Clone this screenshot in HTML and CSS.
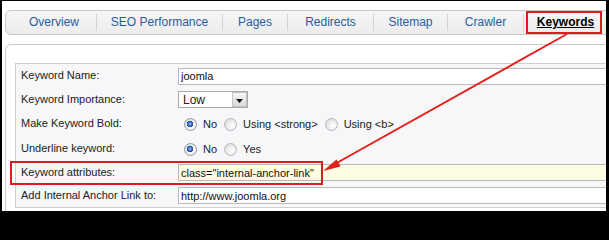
FILE: index.html
```html
<!DOCTYPE html>
<html>
<head>
<meta charset="utf-8">
<title>Keywords</title>
<link rel="stylesheet" href="styles.css">
</head>
<body>
<div class="frame">
  <nav class="tabs">
    <a class="tab w-overview">Overview</a>
    <a class="tab w-seo">SEO Performance</a>
    <a class="tab w-pages">Pages</a>
    <a class="tab w-redirects">Redirects</a>
    <a class="tab w-sitemap">Sitemap</a>
    <a class="tab w-crawler">Crawler</a>
    <a class="tab w-keywords active">Keywords</a>
  </nav>
  <div class="panel">
    <div class="form">
      <div class="label">Keyword Name:</div>
      <div class="value"><input class="text" type="text" readonly value="joomla"></div>

      <div class="label">Keyword Importance:</div>
      <div class="value">
        <div class="select"><span class="select-text">Low</span><span class="select-btn"><svg width="7" height="4" viewBox="0 0 7 4"><path d="M0 0h7L3.5 4z" fill="#111"/></svg></span></div>
      </div>

      <div class="label">Make Keyword Bold:</div>
      <div class="value">
        <span class="radio checked"></span><span class="opt">No</span>
        <span class="radio"></span><span class="opt">Using &lt;strong&gt;</span>
        <span class="radio"></span><span class="opt">Using &lt;b&gt;</span>
      </div>

      <div class="label">Underline keyword:</div>
      <div class="value">
        <span class="radio checked"></span><span class="opt">No</span>
        <span class="radio"></span><span class="opt">Yes</span>
      </div>

      <div class="label">Keyword attributes:</div>
      <div class="value"><input class="text focus" type="text" readonly value='class="internal-anchor-link"'></div>

      <div class="label">Add Internal Anchor Link to:</div>
      <div class="value"><input class="text" type="text" readonly value="http://www.joomla.org"></div>
    </div>
  </div>
</div>
<svg class="annot" width="609" height="214" viewBox="0 0 609 214">
  <rect x="527" y="12" width="74" height="21" fill="none" stroke="#dc1c20" stroke-width="2"/>
  <rect x="11" y="162" width="311" height="22" fill="none" stroke="#dc1c20" stroke-width="2"/>
  <line x1="567" y1="34" x2="334" y2="164.5" stroke="#e3201b" stroke-width="2"/>
  <polygon points="323,171 336.5,159.5 340.5,166.5" fill="#e3201b"/>
</svg>
</body>
</html>
```
FILE: styles.css
```css
html, body {
  margin: 0;
  padding: 0;
  overflow: hidden;
}
body {
  background: #000;
  width: 609px;
  height: 214px;
  position: relative;
  font-family: "Liberation Sans", Arial, sans-serif;
}
.frame {
  margin: 1px 3px 0 2px;
  height: 210px;
  background: #fff;
  overflow: hidden;
}
.tabs {
  margin: 9px 0 0 3px;
  width: 640px;
  height: 25px;
  box-sizing: border-box;
  border: 1px solid #c9c9c9;
  border-radius: 6px;
  background: linear-gradient(#f6f6f6, #ececec);
  display: flex;
  align-items: center;
  padding-left: 6px;
}
.tab {
  height: 17px;
  line-height: 17px;
  text-align: center;
  font-size: 12px;
  color: #2a5c9c;
  border-left: 1px solid #d2d2d2;
  box-sizing: border-box;
  white-space: nowrap;
}
.w-overview { width: 84px; border-left: none; }
.w-seo { width: 126px; }
.w-pages { width: 65px; }
.w-redirects { width: 86px; }
.w-sitemap { width: 74px; }
.w-crawler { width: 76px; }
.w-keywords { width: 84px; }
.tab.active {
  color: #000;
  font-weight: bold;
  text-decoration: underline;
}
.panel {
  margin: 9px 0 0 3px;
  width: 640px;
  height: 200px;
  box-sizing: border-box;
  border: 1px solid #cbcbcb;
  border-radius: 6px;
  padding: 18px 0 0 9px;
}
.form {
  width: 620px;
  border: 1px solid #cfcfcf;
  background: #f7f7f9;
  display: grid;
  grid-template-columns: 162px 1fr;
  grid-template-rows: 24px 23px 26px 24px 23px 23px;
}
.label {
  display: flex;
  align-items: center;
  padding: 0 0 2px 5px;
  font-size: 11px;
  color: #222;
  white-space: nowrap;
}
.value {
  display: flex;
  align-items: center;
  font-size: 11px;
  color: #222;
}
.text {
  width: 440px;
  height: 17px;
  box-sizing: border-box;
  border: 1px solid #b9b9b9;
  padding: 0 2px;
  margin: 0;
  font-family: "Liberation Sans", Arial, sans-serif;
  font-size: 11px;
  color: #111;
  background: #fff;
  outline: none;
}
.text.focus {
  background: #fdfde4;
}
.select {
  width: 70px;
  height: 17px;
  box-sizing: border-box;
  border: 1px solid #a9a9a9;
  background: #fff;
  display: flex;
  align-items: center;
  justify-content: space-between;
}
.select-text {
  padding-left: 4px;
  font-size: 12px;
}
.select-btn {
  width: 15px;
  height: 15px;
  box-sizing: border-box;
  border: 1px solid #c3c3c3;
  background: linear-gradient(#f6f6f6, #d9d9d9);
  display: flex;
  align-items: center;
  justify-content: center;
  padding-top: 2px;
}
.radio {
  width: 13px;
  height: 13px;
  box-sizing: border-box;
  border-radius: 50%;
  border: 1px solid #b3b7bd;
  background: radial-gradient(circle at 65% 65%, #ffffff 0, #f0f0f0 40%, #d2d2d2 100%);
  margin-left: 7px;
  flex: none;
}
.value > .radio:first-child {
  margin-left: 6px;
}
.radio.checked {
  border-color: #8e99a8;
  background:
    radial-gradient(circle at 45% 45%, #9ec0ef 0, #3f73c2 1.8px, #1c4d9c 3px, rgba(255,255,255,0) 3.4px),
    radial-gradient(circle at 65% 65%, #ffffff 0, #eeeeee 45%, #cfcfcf 100%);
}
.opt {
  margin-left: 6px;
  white-space: nowrap;
}
.annot {
  position: absolute;
  left: 0;
  top: 0;
  pointer-events: none;
}
```
